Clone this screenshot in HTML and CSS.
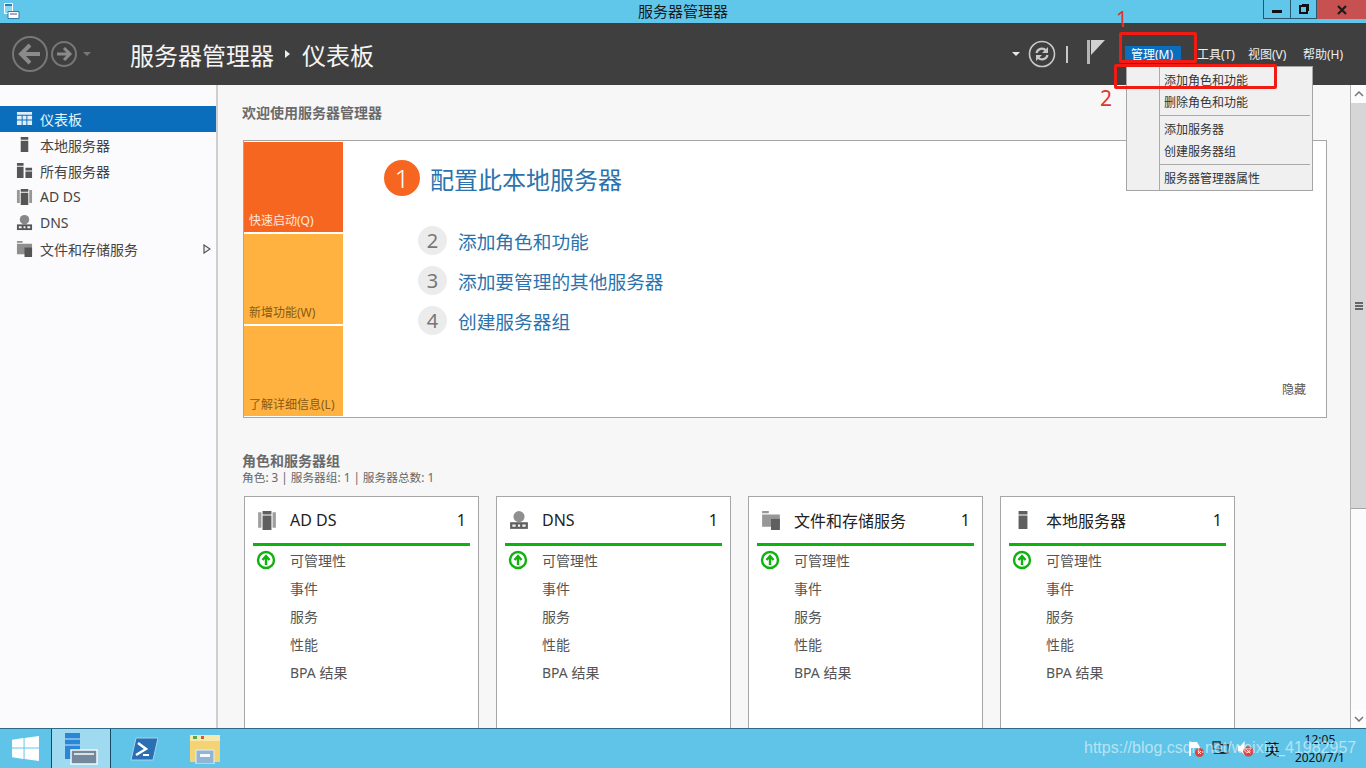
FILE: index.html
```html
<!DOCTYPE html>
<html lang="zh-CN">
<head>
<meta charset="utf-8">
<title>服务器管理器</title>
<link rel="stylesheet" href="styles.css">
</head>
<body>
<svg class="sprite" aria-hidden="true">
  <symbol id="i-server" viewBox="0 0 18 18"><path d="M5 1h8v3H5zM5 5h8v12H5z"/></symbol>
  <symbol id="i-all" viewBox="0 0 18 18"><path d="M1 1h7v3H1zM1 5h7v12H1zM10 6h7v3h-7zM10 10h7v7h-7z"/></symbol>
  <symbol id="i-adds" viewBox="0 0 18 18"><path d="M1 2h3v14H1zM14 2h3v14h-3z" opacity=".6"/><path d="M5 1h8v3H5zM5 5h8v13H5z"/></symbol>
  <symbol id="i-dns" viewBox="0 0 18 18"><circle cx="9" cy="6" r="5" opacity=".7"/><path d="M1 11h16v6H1z"/><path d="M3 13h3v2H3zM8 13h2v2H8zM12 13h3v2h-3z" fill="#f4f4f4"/></symbol>
  <symbol id="i-files" viewBox="0 0 18 18"><path d="M1 1h6v2H1zM1 4h16v11H1z" opacity=".65"/><path d="M9 8h8v10H9z"/></symbol>
  <symbol id="i-up" viewBox="0 0 20 20"><circle cx="10" cy="10" r="8" fill="#fff" stroke="#0fb20f" stroke-width="2.400"/><path d="M10 15V8M6.500 10 10 6l3.500 4" fill="none" stroke="#0fb20f" stroke-width="2.400"/></symbol>
</svg>

<div class="titlebar">
  <div class="title-left">
    <svg class="app-small" viewBox="0 0 18 18"><path d="M2.500 1.500h8v10h-8z" fill="#8fd6f0" stroke="#fff"/><path d="M3 2h7v2H3z" fill="#2a7cc7"/><path d="M6 9.500h11v7H6z" fill="#fff" stroke="#2c7fb0"/><path d="M8 12h7" stroke="#557"/></svg>
  </div>
  <div class="title-text">服务器管理器</div>
  <div class="winbtns">
    <div class="winbtn"><span class="glyph-min"></span></div>
    <div class="winbtn narrow"><span class="glyph-max"></span></div>
    <div class="winbtn close">
      <svg viewBox="0 0 10 10" class="glyph-x"><path d="M1 1l8 8M9 1 1 9" stroke="#1c1c1c" stroke-width="2.200"/></svg>
    </div>
  </div>
</div>

<header class="appbar">
  <div class="nav">
    <svg class="nav-back" viewBox="0 0 38 38"><circle cx="19" cy="19" r="17" fill="none" stroke="#777" stroke-width="2"/><path d="M29 19H11M19 10l-9 9 9 9" fill="none" stroke="#8a8a8a" stroke-width="4"/></svg>
    <svg class="nav-fwd" viewBox="0 0 28 28"><circle cx="14" cy="14" r="12" fill="none" stroke="#777" stroke-width="2"/><path d="M7 14h13M14 8l6 6-6 6" fill="none" stroke="#8a8a8a" stroke-width="3"/></svg>
    <span class="tri-down dim"></span>
  </div>
  <div class="crumb">
    <span>服务器管理器</span>
    <span class="tri-right"></span>
    <span>仪表板</span>
  </div>
  <div class="tools">
    <span class="tri-down"></span>
    <svg class="refresh" viewBox="0 0 28 28"><circle cx="14" cy="14" r="12.500" fill="none" stroke="#c8c8c8" stroke-width="1.600"/><path d="M8.500 13a5.500 5.500 0 0 1 9.500-2.500M19.500 15a5.500 5.500 0 0 1-9.500 2.500" fill="none" stroke="#c8c8c8" stroke-width="2.200"/><path d="M20 7v6h-6zM8 21v-6h6z" fill="#c8c8c8"/></svg>
    <span class="sep"></span>
    <svg class="flag" viewBox="0 0 18 24"><path d="M0 0h3v24H0z" fill="#b5b5b5"/><path d="M4 0h14L4 15z" fill="#d0d0d0"/></svg>
    <nav class="menubar">
      <span class="menu active">管理(M)</span>
      <span class="menu m-tools">工具(T)</span>
      <span class="menu m-view">视图(V)</span>
      <span class="menu m-help">帮助(H)</span>
    </nav>
  </div>
</header>

<main class="main">
  <aside class="sidebar">
    <div class="side-item selected">
      <svg class="side-icon" viewBox="0 0 18 18"><path d="M1 2h16v3H1zM1 6h5v4H1zM7 6h4v4H7zM12 6h5v4h-5zM1 11h5v5H1zM7 11h4v5H7zM12 11h5v5h-5z" fill="#dfeef9"/></svg>
      <span>仪表板</span>
    </div>
    <div class="side-item"><svg class="side-icon"><use href="#i-server"/></svg><span>本地服务器</span></div>
    <div class="side-item"><svg class="side-icon"><use href="#i-all"/></svg><span>所有服务器</span></div>
    <div class="side-item"><svg class="side-icon"><use href="#i-adds"/></svg><span>AD DS</span></div>
    <div class="side-item"><svg class="side-icon"><use href="#i-dns"/></svg><span>DNS</span></div>
    <div class="side-item"><svg class="side-icon"><use href="#i-files"/></svg><span>文件和存储服务</span><svg class="side-arrow" viewBox="0 0 8 10"><path d="M1 1l6 4-6 4z" fill="#f4f4f4" stroke="#555" stroke-width="1.200"/></svg></div>
  </aside>

  <section class="content">
    <h2 class="welcome">欢迎使用服务器管理器</h2>
    <div class="quick">
      <div class="tiles">
        <div class="tile deep">快速启动(Q)</div>
        <div class="tile">新增功能(W)</div>
        <div class="tile">了解详细信息(L)</div>
      </div>
      <div class="steps">
        <div class="step-main"><span class="num-main">1</span><span>配置此本地服务器</span></div>
        <div class="step"><span class="num">2</span><span>添加角色和功能</span></div>
        <div class="step"><span class="num">3</span><span>添加要管理的其他服务器</span></div>
        <div class="step"><span class="num">4</span><span>创建服务器组</span></div>
      </div>
      <div class="hide">隐藏</div>
    </div>

    <h2 class="groups-title">角色和服务器组</h2>
    <p class="groups-sub">角色: 3 | 服务器组: 1 | 服务器总数: 1</p>

    <div class="cards">
      <article class="card">
        <div class="card-head"><svg class="card-icon"><use href="#i-adds"/></svg><span class="card-name">AD DS</span><span class="card-count">1</span></div>
        <div class="row"><svg class="ok"><use href="#i-up"/></svg><span>可管理性</span></div>
        <div class="row"><span>事件</span></div>
        <div class="row"><span>服务</span></div>
        <div class="row"><span>性能</span></div>
        <div class="row"><span>BPA 结果</span></div>
      </article>
      <article class="card">
        <div class="card-head"><svg class="card-icon"><use href="#i-dns"/></svg><span class="card-name">DNS</span><span class="card-count">1</span></div>
        <div class="row"><svg class="ok"><use href="#i-up"/></svg><span>可管理性</span></div>
        <div class="row"><span>事件</span></div>
        <div class="row"><span>服务</span></div>
        <div class="row"><span>性能</span></div>
        <div class="row"><span>BPA 结果</span></div>
      </article>
      <article class="card">
        <div class="card-head"><svg class="card-icon"><use href="#i-files"/></svg><span class="card-name">文件和存储服务</span><span class="card-count">1</span></div>
        <div class="row"><svg class="ok"><use href="#i-up"/></svg><span>可管理性</span></div>
        <div class="row"><span>事件</span></div>
        <div class="row"><span>服务</span></div>
        <div class="row"><span>性能</span></div>
        <div class="row"><span>BPA 结果</span></div>
      </article>
      <article class="card">
        <div class="card-head"><svg class="card-icon"><use href="#i-server"/></svg><span class="card-name">本地服务器</span><span class="card-count">1</span></div>
        <div class="row"><svg class="ok"><use href="#i-up"/></svg><span>可管理性</span></div>
        <div class="row"><span>事件</span></div>
        <div class="row"><span>服务</span></div>
        <div class="row"><span>性能</span></div>
        <div class="row"><span>BPA 结果</span></div>
      </article>
    </div>
  </section>

  <div class="scrollbar">
    <div class="sb-btn"><svg viewBox="0 0 10 6"><path d="M1 5l4-4 4 4" fill="none" stroke="#777" stroke-width="1.500"/></svg></div>
    <div class="sb-track"><div class="sb-thumb"><span class="grip"></span></div></div>
    <div class="sb-btn"><svg viewBox="0 0 10 6"><path d="M1 1l4 4 4-4" fill="none" stroke="#777" stroke-width="1.500"/></svg></div>
  </div>
</main>

<footer class="taskbar">
  <div class="task start">
    <svg class="win" viewBox="0 0 28 26"><path d="M0 4 12 2v10H0zM13 2l15-2v12H13zM0 13h12v11L0 22zM13 13h15v13l-15-2z" fill="#fff"/></svg>
  </div>
  <div class="task current">
    <svg class="task-sm" viewBox="0 0 34 32"><path d="M1 0h15v26H1z" fill="#2a86d6"/><path d="M1 6h15M1 12h15" stroke="#cfe6f7"/><path d="M7 17h26v14H7z" fill="#74899c" stroke="#f2f7fa" stroke-width="1.500"/><path d="M10 21h20" stroke="#fff" stroke-width="1.500"/></svg>
  </div>
  <div class="task ps">
    <svg class="task-ps" viewBox="0 0 28 24"><path d="M6 1h22l-5 22H1z" fill="#2a6fb4" stroke="#a9d3ee"/><path d="M8 6l8 6-10 6" fill="none" stroke="#fff" stroke-width="2.500"/><path d="M13 18h6" stroke="#fff" stroke-width="2"/></svg>
  </div>
  <div class="task ex">
    <svg class="task-ex" viewBox="0 0 32 30"><path d="M1 4h30v24H1z" fill="#f3d373"/><path d="M1 1h30v6H1z" fill="#f8e8ac"/><path d="M4 2h4v3H4z" fill="#59a84a"/><path d="M12 2h3v3h-3z" fill="#d9553f"/><path d="M7 16h18v14H7z" fill="#8fb6d4" stroke="#e6f1f8"/><path d="M11 20h10v3H11z" fill="#f6fafc"/></svg>
  </div>
  <div class="tray">
    <svg class="tray-flag" viewBox="0 0 16 16"><path d="M1 1h2v14H1z" fill="#fff"/><path d="M3 1h6l3 6H3z" fill="#fff"/><circle cx="11.500" cy="11.500" r="4.500" fill="#d8453f"/><path d="M10 10l3 3M13 10l-3 3" stroke="#fff"/></svg>
    <svg class="tray-net" viewBox="0 0 20 18"><path d="M1 1h8v8H1zM9 4h9v9H9z" fill="none" stroke="#16222c" stroke-width="1.300"/><path d="M2 14h14" stroke="#16222c"/></svg>
    <svg class="tray-vol" viewBox="0 0 20 20"><path d="M1 7h3l4-5v15l-4-4H1z" fill="#fff"/><circle cx="12" cy="13" r="5.500" fill="#d8453f"/><path d="M10 11l4 4M14 11l-4 4" stroke="#fff"/></svg>
    <span class="tray-ime">英</span>
    <div class="clock"><span>12:05</span><span>2020/7/1</span></div>
  </div>
</footer>

<div class="dropdown">
  <div class="dd-item">添加角色和功能</div>
  <div class="dd-item">删除角色和功能</div>
  <div class="dd-line"></div>
  <div class="dd-item">添加服务器</div>
  <div class="dd-item">创建服务器组</div>
  <div class="dd-line"></div>
  <div class="dd-item">服务器管理器属性</div>
</div>

<div class="mark mark-1"></div>
<div class="mark mark-2"></div>
<span class="mark-num num-1">1</span>
<span class="mark-num num-2">2</span>
<div class="watermark">https://blog.csdn.net/weixin_41982957</div>
</body>
</html>
```

FILE: styles.css
```css
* { box-sizing: border-box; }
html, body { margin: 0; height: 100%; }
body {
  width: 1366px;
  height: 768px;
  overflow: hidden;
  display: flex;
  flex-direction: column;
  position: relative;
  font-family: "Noto Sans", "Noto Sans CJK SC", sans-serif;
  font-size: 14px;
  color: #333;
  background: #f7f7f7;
}
.sprite { display: none; }

/* title bar */
.titlebar {
  flex: 0 0 23px;
  display: grid;
  grid-template-columns: 1fr auto 1fr;
  background: #60c6ea;
  color: #1a1a1a;
}
.title-left { display: flex; align-items: flex-start; padding: 2px 0 0 2px; }
.app-small { width: 18px; height: 18px; }
.title-text { font-size: 15px; line-height: 23px; }
.winbtns { display: flex; justify-content: flex-end; align-items: flex-start; }
.winbtn {
  height: 19px;
  width: 28px;
  display: flex;
  align-items: center;
  justify-content: center;
  border: 1px solid #27566f;
  border-top: 0;
}
.winbtn.narrow { width: 26px; border-left: 0; }
.winbtn.close { width: 49px; background: #c75050; border: 0; }
.glyph-min { width: 10px; height: 3px; background: #111; margin-top: 4px; }
.glyph-max { width: 9px; height: 9px; border: 2px solid #111; box-shadow: 2px -2px 0 -1px #111; }
.glyph-x { width: 10px; height: 10px; }

/* app bar */
.appbar {
  flex: 0 0 62px;
  display: flex;
  align-items: center;
  background: #3f3f3f;
  color: #fff;
  padding-left: 11px;
}
.nav { display: flex; align-items: center; width: 119px; }
.nav-back { width: 38px; height: 38px; }
.nav-fwd { width: 28px; height: 28px; margin-left: 1px; }
.tri-down { width: 0; height: 0; border: 4px solid transparent; border-top: 4px solid #e8e8e8; border-bottom: 0; }
.tri-down.dim { border-top-color: #777; margin-left: 5px; }
.crumb { display: flex; align-items: center; font-size: 24px; color: #f4f4f4; }
.tri-right { width: 0; height: 0; border: 4px solid transparent; border-left: 5px solid #eee; border-right: 0; margin: 0 12px 0 11px; }
.tools { margin-left: auto; display: flex; align-items: center; }
.refresh { width: 28px; height: 28px; margin-left: 8px; }
.sep { width: 2px; height: 17px; background: #c8c8c8; margin: 0 19px 0 10px; }
.flag { width: 18px; height: 24px; margin-right: 20px; margin-top: -4px; }
.menubar { display: flex; align-items: center; font-size: 12px; color: #eee; padding-right: 21px; margin-top: 1px; }
.menu { line-height: 17px; flex: none; }
.menu.active { background: #0a6ebd; color: #fff; padding: 0 6px; width: 56px; margin-right: 16px; }
.m-tools { width: 51px; }
.m-view { width: 55px; }
.m-help { width: 42px; }

/* main */
.main { flex: 1; min-height: 0; display: flex; overflow: hidden; }
.sidebar {
  flex: 0 0 218px;
  background: #fbfbfd;
  border-right: 2px solid #cfcfcf;
  padding-top: 21px;
}
.side-item { height: 26px; display: flex; align-items: center; padding: 0 0 1px 16px; font-size: 14px; color: #444; position: relative; }
.side-item.selected { background: #0a6ebd; color: #e6f3fc; }
.side-icon { width: 17px; height: 17px; margin-right: 7px; fill: #555; flex: none; }
.side-arrow { position: absolute; left: 203px; top: 8px; width: 8px; height: 10px; }

.content { flex: 1; min-width: 0; padding: 19px 0 0 24px; overflow: hidden; }
.welcome { margin: 0; font-size: 14px; line-height: 18px; font-weight: 700; color: #6a6a6a; }
.quick {
  width: 1084px;
  height: 278px;
  margin: 18px 0 0 1px;
  background: #fff;
  border: 1px solid #a6a6a6;
  display: flex;
  position: relative;
  padding: 1px 0 1px 0;
}
.tiles { width: 99px; display: flex; flex-direction: column; gap: 2px; }
.tile { flex: 1; background: #ffb240; color: #8a5a10; font-size: 12px; display: flex; align-items: flex-end; padding: 0 5px 3px; }
.tile.deep { background: #f76620; color: #fde9dd; }
.steps { padding: 18px 0 0 41px; color: #2a73ad; }
.step-main { display: flex; align-items: center; font-size: 24px; gap: 10px; height: 36px; margin-bottom: 29px; }
.num-main { width: 36px; height: 36px; border-radius: 50%; background: #f76620; color: #fff; text-align: center; line-height: 36px; font-weight: 300; font-size: 26px; }
.step { display: flex; align-items: center; font-size: 18.700px; gap: 11px; height: 30px; margin: 0 0 10px 34px; }
.num { width: 29px; height: 29px; border-radius: 50%; background: #ececec; color: #777; text-align: center; line-height: 29px; font-size: 20px; }
.hide { position: absolute; right: 20px; bottom: 19px; font-size: 12px; color: #555; }
.groups-title { margin: 34px 0 0; font-size: 14px; line-height: 18px; font-weight: 700; color: #6a6a6a; }
.groups-sub { margin: -1px 0 0; font-size: 11.700px; line-height: 16px; color: #666; }

.cards { display: flex; gap: 17px; margin: 11px 0 0 2px; }
.card { width: 235px; height: 262px; flex: none; background: #fff; border: 1px solid #a6a6a6; padding: 0 8px; }
.card-head { display: flex; align-items: center; height: 49px; border-bottom: 3px solid #0fb20f; color: #222; font-size: 16px; }
.card-icon { width: 20px; height: 20px; margin: 0 13px 0 4px; fill: #5f5f5f; flex: none; }
.card-name { flex: 1; }
.card-count { padding-right: 4px; }
.row { height: 28px; display: flex; align-items: center; padding-left: 37px; position: relative; color: #555; font-size: 14px; }
.ok { position: absolute; left: 3px; top: 4px; width: 20px; height: 20px; }

/* scrollbar */
.scrollbar { flex: 0 0 16px; display: flex; flex-direction: column; background: #fbfbfb; border-left: 1px solid #b5b5b5; }
.sb-btn { height: 18px; background: #fdfdfd; display: flex; align-items: center; justify-content: center; flex: none; }
.sb-btn svg { width: 10px; height: 6px; }
.sb-track { flex: 1; min-height: 0; }
.sb-thumb { height: 406px; background: #d6d6d6; border-bottom: 1px solid #a5a5a5; display: flex; align-items: center; justify-content: center; }
.grip { width: 8px; height: 8px; border-top: 2px solid #666; border-bottom: 2px solid #666; background: linear-gradient(#666,#666) center/100% 2px no-repeat; }

/* taskbar */
.taskbar {
  flex: 0 0 40px;
  display: flex;
  align-items: center;
  background: #5fc4e8;
  border-top: 1px solid #2e6a87;
  position: relative;
}
.task { height: 39px; display: flex; align-items: center; justify-content: center; }
.start { width: 51px; }
.win { width: 27px; height: 25px; }
.current { width: 60px; background: #9fdaf0; border-left: 1px solid #174a63; border-right: 1px solid #174a63; }
.task-sm { width: 34px; height: 32px; }
.ps { width: 65px; }
.task-ps { width: 28px; height: 24px; }
.ex { width: 58px; }
.task-ex { width: 32px; height: 30px; }
.tray { margin-left: auto; display: flex; align-items: center; height: 39px; padding-right: 21px; position: relative; }
.tray-flag { width: 16px; height: 16px; }
.tray-net { width: 18px; height: 16px; margin-left: 8px; }
.tray-vol { width: 19px; height: 19px; margin-left: 7px; }
.tray-ime { font-size: 15px; color: #111; margin: 0 15px 0 9px; }
.clock { display: flex; flex-direction: column; align-items: center; font-size: 12px; line-height: 18px; color: #111; }

/* overlays */
.dropdown {
  position: absolute;
  left: 1126px;
  top: 66px;
  width: 187px;
  height: 125px;
  padding: 3px 0 0;
  background: linear-gradient(90deg, #f0f0f0 32px, #aaa 32px, #aaa 33px, #f0f0f0 33px);
  border: 1px solid #a5a5a5;
  font-size: 12px;
  color: #333;
}
.dd-item { height: 22px; line-height: 22px; padding-left: 37px; }
.dd-line { height: 1px; background: #aaa; margin: 1px 2px 3px 32px; }
.mark { position: absolute; border: 3px solid #f01c14; border-radius: 2px; }
.mark-1 { left: 1119px; top: 32px; width: 78px; height: 31px; }
.mark-2 { left: 1114px; top: 64px; width: 163px; height: 25px; }
.mark-num { position: absolute; color: #e0352e; font-size: 21px; line-height: 24px; }
.num-1 { left: 1116px; top: 7px; }
.num-2 { left: 1100px; top: 86px; }
.watermark {
  position: absolute;
  left: 1084px;
  top: 738px;
  font-family: "Liberation Sans", sans-serif;
  font-size: 16px;
  line-height: 20px;
  color: rgba(255,255,255,.55);
  white-space: nowrap;
}
```
